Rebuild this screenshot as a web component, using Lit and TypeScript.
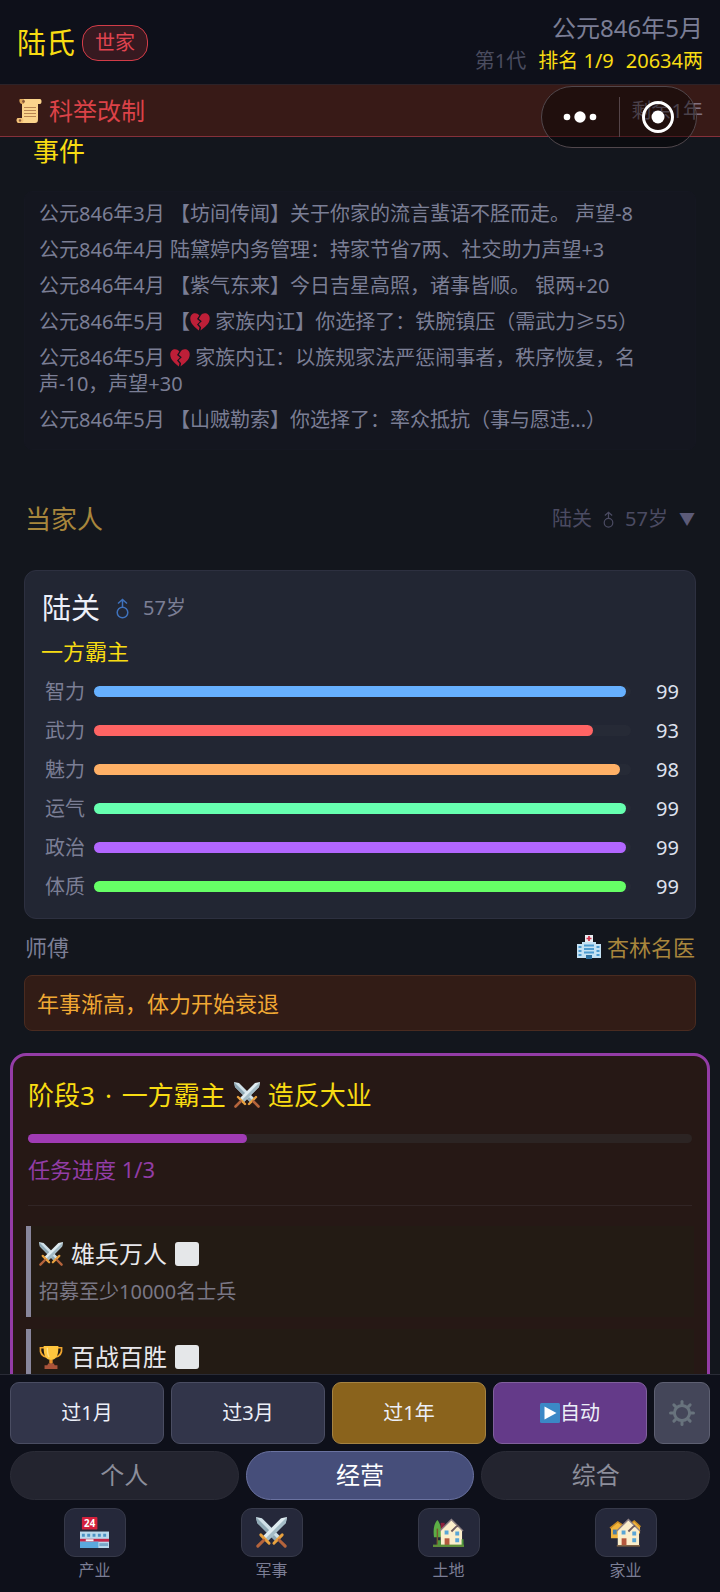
import { LitElement, html, css, svg, nothing } from "lit";
import { customElement, state } from "lit/decorators.js";

const scroll = html`<svg class="emoji" viewBox="0 0 26 26" aria-hidden="true">
  <path d="M6 1h18c2 0 2 5 0 5h-2v15c0 3-1 4-3 4H3c-3 0-3-5 0-5h3z" fill="#fbd48c"/>
  <path d="M4 1h4v5H6C3 6 3 1 4 1z" fill="#e0a95c"/><circle cx="7.5" cy="3.5" r="1.4" fill="#8a5a3a"/>
  <path d="M2 20h4c2 0 2 5-1 5H3c-3 0-3-5-1-5z" fill="#f3c178"/><circle cx="4" cy="22.5" r="1.2" fill="#8a5a3a"/>
  <path d="M8 9.500h12M8 12.500h12M8 15.500h12M8 18.500h12" stroke="#b98552" stroke-width="1.2"/>
</svg>`;

const heart = html`<svg class="emoji" viewBox="0 0 20 20" role="img" aria-label="心碎">
  <path d="M9.300 3.500C6.500-.5 0 1 .3 7 .5 12 5 15 8.800 18.500l.7-3-2.500-3 3-3-3-2.500z" fill="#be1f38"/>
  <path d="M10.700 3.500c2.500-4 9.500-2.500 9 3.500-.3 5-5 8-9.200 11.500l.6-3.300-2.500-3 3.200-3-3-2.500z" fill="#be1f38"/>
</svg>`;

const swords = html`<svg class="emoji" viewBox="0 0 26 26" role="img" aria-label="剑">
  <path d="M0 0l5 1 16 16-4 4L1 5z" fill="#cfe0e8"/><path d="M0 0l19 19-2 2L1 5z" fill="#8fa9b5"/>
  <path d="M26 0l-5 1L5 17l4 4L25 5z" fill="#dfecf1"/><path d="M26 0L7 19l2 2L25 5z" fill="#a4bcc6"/>
  <path d="M15 22l7-7M4 15l7 7" stroke="#e8a13e" stroke-width="2.4" stroke-linecap="round"/>
  <path d="M19.500 19.500l5 5M6.500 19.500l-5 5" stroke="#b5643c" stroke-width="2.6" stroke-linecap="round"/>
</svg>`;

const trophy = html`<svg class="emoji" viewBox="0 0 26 26" role="img" aria-label="奖杯">
  <path d="M6 3H1.500C1 9 3 12 8 13M20 3h4.500C25 9 23 12 18 13" fill="none" stroke="#f0a52e" stroke-width="1.8"/>
  <path d="M5 1h16c0 8-1 14-6.500 15v4h-3v-4C6 15 5 9 5 1z" fill="#ffc63e"/>
  <path d="M9 3c0 5 .5 8 2 10" fill="none" stroke="#ffe08a" stroke-width="1.5"/>
  <path d="M11.500 16h3v4h-3z" fill="#e8912c"/><path d="M10 20h6l1 2h3v4H6v-4h3z" fill="#a8533a"/>
</svg>`;

const hospital = html`<svg class="emoji" viewBox="0 0 24 24" aria-hidden="true">
  <path d="M8 0h8v8H8z" fill="#e9edf2"/><path d="M12 1v5M9.500 3.500h5" stroke="#d0304a" stroke-width="1.7"/>
  <path d="M0 9h5V7h14v2h5v14H0z" fill="#c4e2f4"/>
  <path d="M1.500 12h3M1.500 16h3M1.500 20h3M19.500 12h3M19.500 16h3M19.500 20h3M7 10.500h10M7 14h10M7 17.500h10" stroke="#4d9bd0" stroke-width="2"/>
  <path d="M9 20h6v4H9z" fill="#2c6f9e"/>
</svg>`;

const store = html`<svg class="emoji" viewBox="0 0 32 32" aria-hidden="true">
  <rect x="3" y="0" width="16" height="13" rx="1" fill="#d4213d"/>
  <text x="11" y="10" text-anchor="middle" font-size="10" font-weight="700" fill="#fff">24</text>
  <path d="M1 15h30v17H1z" fill="#b9d9ec"/><path d="M1 22.500h30v3H1z" fill="#c5274a"/>
  <path d="M3 18.800h26" stroke="#4c93c4" stroke-width="3" stroke-dasharray="3 2.5"/>
  <path d="M1 25.500h19V32H1z" fill="#5ba9dd"/><path d="M7 23h8v2H7z" fill="#f5f5f7"/><path d="M21 27h9v3h-9z" fill="#78a8c8"/>
</svg>`;

const house = (x: number) => svg`
  <path d="M${x} 14L${x + 11} 3l11 11v15H${x}z" fill="#fbeecb"/>
  <path d="M${x - 1} 14.500L${x + 11} 2.500l12 12" fill="none" stroke="#8d8085" stroke-width="1.4"/>
  <path d="M${x + 11} 15l5-5 2-1" fill="none" stroke="#6d5a60" stroke-width="2"/>
  <path d="M${x + 4} 14h4v4h-4zM${x + 15} 15h4v4h-4zM${x + 15} 22h4v4h-4z" fill="#5aa6d6"/>
  <path d="M${x + 4} 22h5v7H${x + 4}z" fill="#b4583e"/>`;

const garden = html`<svg class="emoji" viewBox="0 0 32 32" aria-hidden="true">
  <path d="M8 6h4v8H8z" fill="#8c1f3c"/>
  <path d="M4.500 3C8 7 9 13 8 21H1C0 13 1 7 4.500 3z" fill="#5cae45"/><path d="M4.500 12v17" stroke="#7a5a2c" stroke-width="1.5"/>
  ${house(8)}
  <path d="M0 28.500h32V31H0z" fill="#5f8f3a"/><path d="M5 24h3v5H5zM29.500 23h2v6h-2z" fill="#4f9a3e"/>
</svg>`;

const estate = html`<svg class="emoji" viewBox="0 0 32 32" aria-hidden="true">
  <path d="M1 11l7-6 6 5v12H1zM20 8l5-4 6 6v7H20z" fill="#f2b53c"/>
  <path d="M3 13h4v5H3z" fill="#4b7fa8"/><path d="M0 11.500L8 5l6 4M20 8l5-4 6.500 6" fill="none" stroke="#c98a22" stroke-width="1.5"/>
  ${house(8)}
  <path d="M7 29h24v1.500H7z" fill="#8b6b48"/>
</svg>`;

const gear = html`<svg class="gear" viewBox="0 0 26 26" aria-hidden="true">
  <circle cx="13" cy="13" r="7.6" fill="none" stroke="#68737d" stroke-width="3"/>
  ${[0, 45, 90, 135, 180, 225, 270, 315].map(
    (a) => svg`<path d="M13 1.500v3" transform="rotate(${a} 13 13)" stroke="#68737d" stroke-width="3" stroke-linecap="round"/>`
  )}
</svg>`;

const play = html`<svg class="emoji" viewBox="0 0 20 20" aria-hidden="true">
  <rect width="20" height="20" rx="1.5" fill="#3b88c6"/><path d="M4.500 3.500L16.500 10l-12 6.500z" fill="#fff"/>
</svg>`;

const male = html`<svg class="male" viewBox="0 0 13 21" role="img" aria-label="男">
  <circle cx="6.5" cy="14.5" r="5.3" fill="none" stroke="currentColor" stroke-width="1.5"/>
  <path d="M6.500 9V1.500M2 5.500l4.500-4 4.500 4" fill="none" stroke="currentColor" stroke-width="1.5"/>
</svg>`;

interface Stat { label: string; value: number; tone: string }

@customElement("app-root")
export class AppRoot extends LitElement {
  static styles = css`
    :host {
      display: flex; flex-direction: column; position: relative;
      height: 100vh; overflow: hidden; background: #13161d; color: #e6e6f0;
      font: 400 20px/26px "Noto Sans", "Noto Sans CJK SC", sans-serif;
    }
    * { box-sizing: border-box; }
    h1, h2, h3, p, ul { margin: 0; padding: 0; font-size: inherit; font-weight: 400; list-style: none; }
    button { font: inherit; color: inherit; padding: 0; margin: 0; border: 0; background: none; cursor: pointer; }
    .emoji { width: 1em; height: 1em; vertical-align: -3px; flex: none; overflow: visible; }
    .male { width: 13px; height: 21px; flex: none; }

    .header {
      display: flex; justify-content: space-between; align-items: center;
      height: 85px; padding: 3px 17px 0; background: #0e101a; border-bottom: 1px solid #2c2228;
      flex: none;
    }
    .clan { display: flex; align-items: center; gap: 7px; padding-bottom: 2px; }
    .clan-name { font-size: 29px; line-height: 36px; color: #f8dc12; }
    .badge {
      border: 1px solid #d23c48; border-radius: 16px; background: #361920; color: #e04450;
      padding: 0 12px; line-height: 34px;
    }
    .meta { text-align: right; }
    .date { font-size: 24px; line-height: 34px; color: #7b7e95; }
    .facts { display: flex; justify-content: flex-end; gap: 12px; line-height: 32px; color: #f8dc12; }
    .generation { color: #4a4c5f; }

    .banner {
      display: flex; justify-content: space-between; align-items: center; flex: none;
      height: 52px; padding: 0 17px 0 16px; background: #381a17; border-bottom: 1px solid #85303a;
    }
    .policy { display: flex; align-items: center; gap: 7px; font-size: 24px; line-height: 32px; color: #dc4248; }
    .policy .emoji { width: 26px; height: 26px; }
    .remaining { color: #807080; }

    .capsule {
      position: absolute; top: 86px; right: 23px; width: 156px; height: 62px; z-index: 2;
      display: flex; align-items: center; border: 1px solid #51474c; border-radius: 31px;
      background: rgba(0, 0, 0, 0.42);
    }
    .capsule button { flex: 1; height: 40px; display: flex; align-items: center; justify-content: center; }
    .capsule button + button { border-left: 1px solid #544448; }
    .capsule svg { width: 34px; height: 34px; }

    .content { flex: 1; min-height: 0; overflow-y: auto; scrollbar-width: none; }
    .events-title { padding-left: 33px; font-size: 26px; line-height: 28px; color: #f8dc12; }
    .events {
      margin: 26px 24px 0; padding: 4px 14px 11px; border: 1px solid #151721; border-radius: 8px;
      background: #14161f; color: #7b7e95;
    }
    .events li { padding: 5px 0; }

    .section { display: flex; justify-content: space-between; align-items: center; margin: 49px 25px 31px; width: calc(100% - 50px); }
    .section-title { font-size: 26px; line-height: 40px; color: #a8863c; }
    .toggle { display: flex; align-items: center; gap: 11px; color: #4b4b62; line-height: 28px; }
    .toggle .male { width: 11px; height: 17px; }
    .arrow { font-size: 16px; color: #5c5b78; }

    .card {
      margin: 0 24px; padding: 17px 16px 12px; border: 1px solid #2d3040; border-radius: 12px; background: #222633;
    }
    .who { display: flex; align-items: center; line-height: 40px; color: #7b7e95; }
    .who-name { font-size: 29px; color: #eceff8; margin: 0 16px 0 1px; }
    .who .male { color: #3f72bd; margin-right: 14px; }
    .rank { margin: 7px 0 5px; font-size: 22px; line-height: 32px; color: #f8dc12; }
    .stat { display: grid; grid-template-columns: 48px 1fr 32px; align-items: center; height: 39px; }
    .stat-label { padding-left: 4px; color: #7b7e95; }
    .track { height: 11px; margin: 0 16px 0 5px; border-radius: 6px; background: #262a36; }
    .fill { height: 100%; border-radius: 6px; }
    .blue { background: #66b0ff; }
    .red { background: #ff6464; }
    .orange { background: #ffb066; }
    .mint { background: #66ffb0; }
    .violet { background: #b266ff; }
    .green { background: #66ff66; }
    .stat-value { text-align: right; color: #dfe1ee; }

    .master { display: flex; justify-content: space-between; align-items: center; height: 56px; margin: 0 24px; font-size: 22px; color: #7b7e95; padding: 0 1px; }
    .master-name { display: flex; align-items: center; gap: 6px; color: #a8863c; }
    .master-name .emoji { width: 24px; height: 24px; }
    .warning {
      margin: 0 24px; padding: 0 12px; border: 1px solid #4a2b20; border-radius: 8px; background: #321c16;
      font-size: 22px; line-height: 54px; color: #f0a834;
    }

    .quest {
      margin: 22px 10px 0; padding: 19px 15px; border: 3px solid #943ca6; border-radius: 16px; background: #261815;
    }
    .quest-title { display: flex; align-items: center; gap: 8px; font-size: 26px; line-height: 40px; color: #f8dc12; }
    .stage { display: flex; gap: 10px; }
    .quest-bar { margin-top: 19px; height: 9px; border-radius: 5px; background: #2c2423; }
    .quest-fill { height: 100%; border-radius: 5px; background: #a03bb4; }
    .quest-progress { margin-top: 11px; font-size: 22px; line-height: 30px; color: #923da6; }
    .rule { height: 1px; margin: 21px 0 20px; border: 0; background: #312525; }
    .tasks { display: grid; gap: 12px; margin: 0 -2px; }
    .task { border-left: 5px solid #88869c; background: #231b14; padding: 10px 8px 11px; }
    .task-name { display: flex; align-items: center; gap: 8px; font-size: 24px; line-height: 36px; color: #e8e8ec; }
    .unchecked { appearance: none; width: 24px; height: 24px; margin: 0; border-radius: 3px; background: #e5e7e9; }
    .task-note { margin-top: 6px; line-height: 28px; color: #7a7785; }

    .dock { flex: none; background: #0e101a; border-top: 1px solid #292b36; padding: 7px 10px 9px; }
    .actions { display: grid; grid-template-columns: repeat(4, 1fr) 56px; gap: 7px; }
    .action {
      height: 62px; border: 1px solid #4a4d62; border-radius: 9px; background: #32354a; color: #eceff8;
      display: flex; align-items: center; justify-content: center;
    }
    .action.year { background: #8a631c; border-color: #a58342; }
    .action.auto { background: #643a89; border-color: #80609c; }
    .action.settings { background: #444659; border-color: #5e6072; }
    .gear { width: 26px; height: 26px; }
    .tabs { display: grid; grid-template-columns: repeat(3, 1fr); gap: 7px; margin-top: 7px; }
    .tab { height: 49px; padding-bottom: 2px; border: 1px solid #2b2c37; border-radius: 25px; background: #23242f; color: #8c8e9b; font-size: 24px; }
    .tab.active { background: #464e7a; border-color: #6a72a0; color: #fff; }
    .nav { display: grid; grid-template-columns: repeat(4, 1fr); margin: 8px -4px 0; }
    .nav-item { display: grid; justify-items: center; color: #7b7e95; font-size: 16px; line-height: 26px; }
    .nav-icon {
      width: 62px; height: 49px; border: 1px solid #363949; border-radius: 11px; background: #25283a;
      display: flex; align-items: center; justify-content: center; font-size: 31px;
    }
  `;

  @state() private tab = "经营";
  @state() private open = true;

  private stats: Stat[] = [
    { label: "智力", value: 99, tone: "blue" },
    { label: "武力", value: 93, tone: "red" },
    { label: "魅力", value: 98, tone: "orange" },
    { label: "运气", value: 99, tone: "mint" },
    { label: "政治", value: 99, tone: "violet" },
    { label: "体质", value: 99, tone: "green" },
  ];

  private nav = [
    { label: "产业", icon: store },
    { label: "军事", icon: swords },
    { label: "土地", icon: garden },
    { label: "家业", icon: estate },
  ];

  private renderLeader() {
    return html`
      <article class="card">
        <h3 class="who"><span class="who-name">陆关</span>${male}<span>57岁</span></h3>
        <p class="rank">一方霸主</p>
        ${this.stats.map(
          (s) => html`<div class="stat">
            <span class="stat-label">${s.label}</span>
            <div class="track"><div class="fill ${s.tone}" style="width:${s.value}%"></div></div>
            <span class="stat-value">${s.value}</span>
          </div>`
        )}
      </article>`;
  }

  render() {
    return html`
      <header class="header">
        <div class="clan"><h1 class="clan-name">陆氏</h1><span class="badge">世家</span></div>
        <div class="meta">
          <div class="date">公元846年5月</div>
          <div class="facts"><span class="generation">第1代</span><span>排名 1/9</span><span>20634两</span></div>
        </div>
      </header>
      <div class="banner">
        <div class="policy">${scroll}<span>科举改制</span></div>
        <span class="remaining">剩余1年</span>
      </div>
      <div class="capsule">
        <button aria-label="更多"><svg viewBox="0 0 34 34"><g fill="#fff"><circle cx="4" cy="17" r="3.3"/><circle cx="17" cy="17" r="5.7"/><circle cx="30" cy="17" r="3.3"/></g></svg></button>
        <button aria-label="关闭"><svg viewBox="0 0 34 34"><circle cx="17" cy="17" r="14.5" fill="none" stroke="#fff" stroke-width="3"/><circle cx="17" cy="17" r="6.5" fill="#fff"/></svg></button>
      </div>

      <main class="content">
        <h2 class="events-title">事件</h2>
        <ul class="events">
          <li>公元846年3月 【坊间传闻】关于你家的流言蜚语不胫而走。 声望-8</li>
          <li>公元846年4月 陆黛婷内务管理：持家节省7两、社交助力声望+3</li>
          <li>公元846年4月 【紫气东来】今日吉星高照，诸事皆顺。 银两+20</li>
          <li>公元846年5月 【${heart} 家族内讧】你选择了：铁腕镇压（需武力≥55）</li>
          <li>公元846年5月 ${heart} 家族内讧：以族规家法严惩闹事者，秩序恢复，名声-10，声望+30</li>
          <li>公元846年5月 【山贼勒索】你选择了：率众抵抗（事与愿违...）</li>
        </ul>

        <button class="section" @click=${() => (this.open = !this.open)}>
          <span class="section-title">当家人</span>
          <span class="toggle"><span>陆关</span>${male}<span>57岁</span><span class="arrow">▼</span></span>
        </button>
        ${this.open ? this.renderLeader() : nothing}
        <div class="master"><span>师傅</span><span class="master-name">${hospital}<span>杏林名医</span></span></div>
        <p class="warning">年事渐高，体力开始衰退</p>

        <section class="quest">
          <h2 class="quest-title">
            <span class="stage"><span>阶段3</span><span>·</span><span>一方霸主</span></span>${swords}<span>造反大业</span>
          </h2>
          <div class="quest-bar"><div class="quest-fill" style="width:33%"></div></div>
          <p class="quest-progress">任务进度 1/3</p>
          <hr class="rule" />
          <ul class="tasks">
            <li class="task">
              <label class="task-name">${swords}<span>雄兵万人</span><input class="unchecked" type="checkbox" disabled /></label>
              <p class="task-note">招募至少10000名士兵</p>
            </li>
            <li class="task">
              <label class="task-name">${trophy}<span>百战百胜</span><input class="unchecked" type="checkbox" disabled /></label>
            </li>
          </ul>
        </section>
      </main>

      <footer class="dock">
        <div class="actions">
          <button class="action">过1月</button>
          <button class="action">过3月</button>
          <button class="action year">过1年</button>
          <button class="action auto">${play}<span>自动</span></button>
          <button class="action settings" aria-label="设置">${gear}</button>
        </div>
        <div class="tabs">
          ${["个人", "经营", "综合"].map(
            (t) => html`<button class="tab ${t === this.tab ? "active" : ""}" @click=${() => (this.tab = t)}>${t}</button>`
          )}
        </div>
        <nav class="nav">
          ${this.nav.map((n) => html`<button class="nav-item"><span class="nav-icon">${n.icon}</span><span>${n.label}</span></button>`)}
        </nav>
      </footer>`;
  }
}
